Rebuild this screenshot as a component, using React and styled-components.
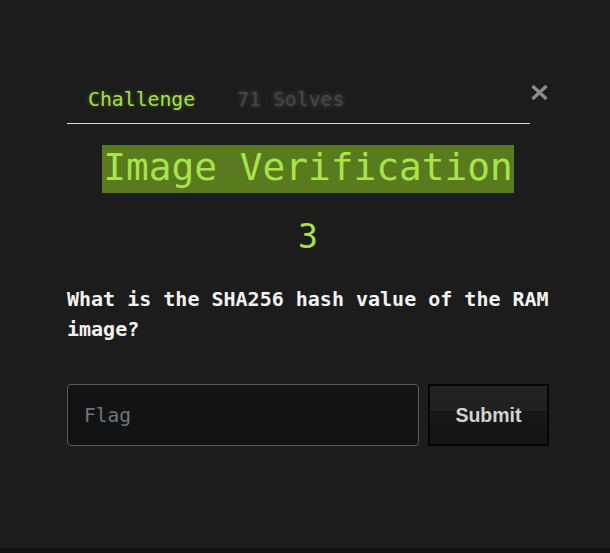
import React from "react";
import styled, { createGlobalStyle } from "styled-components";

const Global = createGlobalStyle`
  html, body { margin: 0; padding: 0; background: #121212; }
  body { font-family: "DejaVu Sans Mono", monospace; }
`;

const Modal = styled.div`
  height: 548px;
  box-sizing: border-box;
  background: #1c1c1c;
  padding: 80px 61px 0 67px;
`;

const Header = styled.div`
  display: flex;
  align-items: flex-start;
`;

const Nav = styled.nav`
  flex: 1;
  display: flex;
  border-bottom: 1px solid #d8d8d8;
`;

const Tab = styled.div`
  padding: 8px 21px 11px;
  font-size: 19.8px;
  line-height: 24px;
  color: ${(p) => (p.$active ? "#a6e14a" : "#474747")};
  text-shadow: ${(p) =>
    p.$active ? "0 0 4px rgba(166,225,74,0.35)" : "0 0 5px rgba(120,120,120,0.6)"};
`;

const Close = styled.button`
  margin-top: 4px;
  padding: 0;
  border: 0;
  background: none;
  width: 19px;
  height: 17px;
  display: flex;
  cursor: pointer;
`;

const TitleRow = styled.div`
  display: flex;
  justify-content: center;
  margin-top: 21px;
`;

const Title = styled.h2`
  margin: 0;
  padding: 0 1px 3px;
  font-weight: normal;
  font-size: 37.8px;
  line-height: 45px;
  color: #a8e44c;
  background: #5a7b1d;
`;

const Points = styled.h4`
  margin: 24px 0 0;
  text-align: center;
  font-weight: normal;
  font-size: 33px;
  line-height: 40px;
  color: #a6e14a;
`;

const Question = styled.p`
  margin: 27px 0 0;
  font-size: 20px;
  line-height: 30px;
  font-weight: bold;
  color: #f2f2f2;
`;

const Form = styled.form`
  display: flex;
  gap: 9px;
  margin-top: 40px;
`;

const Input = styled.input`
  width: 352px;
  height: 62px;
  box-sizing: border-box;
  padding: 0 16px;
  border: 1px solid #5a5a5a;
  border-radius: 4px;
  background: #131313;
  color: #ddd;
  font-family: "DejaVu Sans Mono", monospace;
  font-size: 19.5px;
  outline: none;
  &::placeholder { color: #6c757d; }
`;

const Submit = styled.button`
  width: 121px;
  height: 62px;
  box-sizing: border-box;
  border: 2px solid #050505;
  background: linear-gradient(#222222 0%, #202020 43%, #181818 43%, #151515 100%);
  color: #d2d2d2;
  font-family: "Liberation Sans", Arial, sans-serif;
  font-weight: bold;
  font-size: 19.5px;
  cursor: pointer;
`;

export default function App() {
  return (
    <>
      <Global />
      <Modal>
        <Header>
          <Nav>
            <Tab $active>Challenge</Tab>
            <Tab>71 Solves</Tab>
          </Nav>
          <Close aria-label="Close">
            <svg width="19" height="17" viewBox="0 0 19 17">
              <path d="M2.5 2 L16.5 15 M16.5 2 L2.5 15" stroke="#8a8a8a" strokeWidth="3.4" />
            </svg>
          </Close>
        </Header>
        <TitleRow>
          <Title>Image Verification</Title>
        </TitleRow>
        <Points>3</Points>
        <Question>What is the SHA256 hash value of the RAM image?</Question>
        <Form onSubmit={(e) => e.preventDefault()}>
          <Input placeholder="Flag" />
          <Submit type="submit">Submit</Submit>
        </Form>
      </Modal>
    </>
  );
}
